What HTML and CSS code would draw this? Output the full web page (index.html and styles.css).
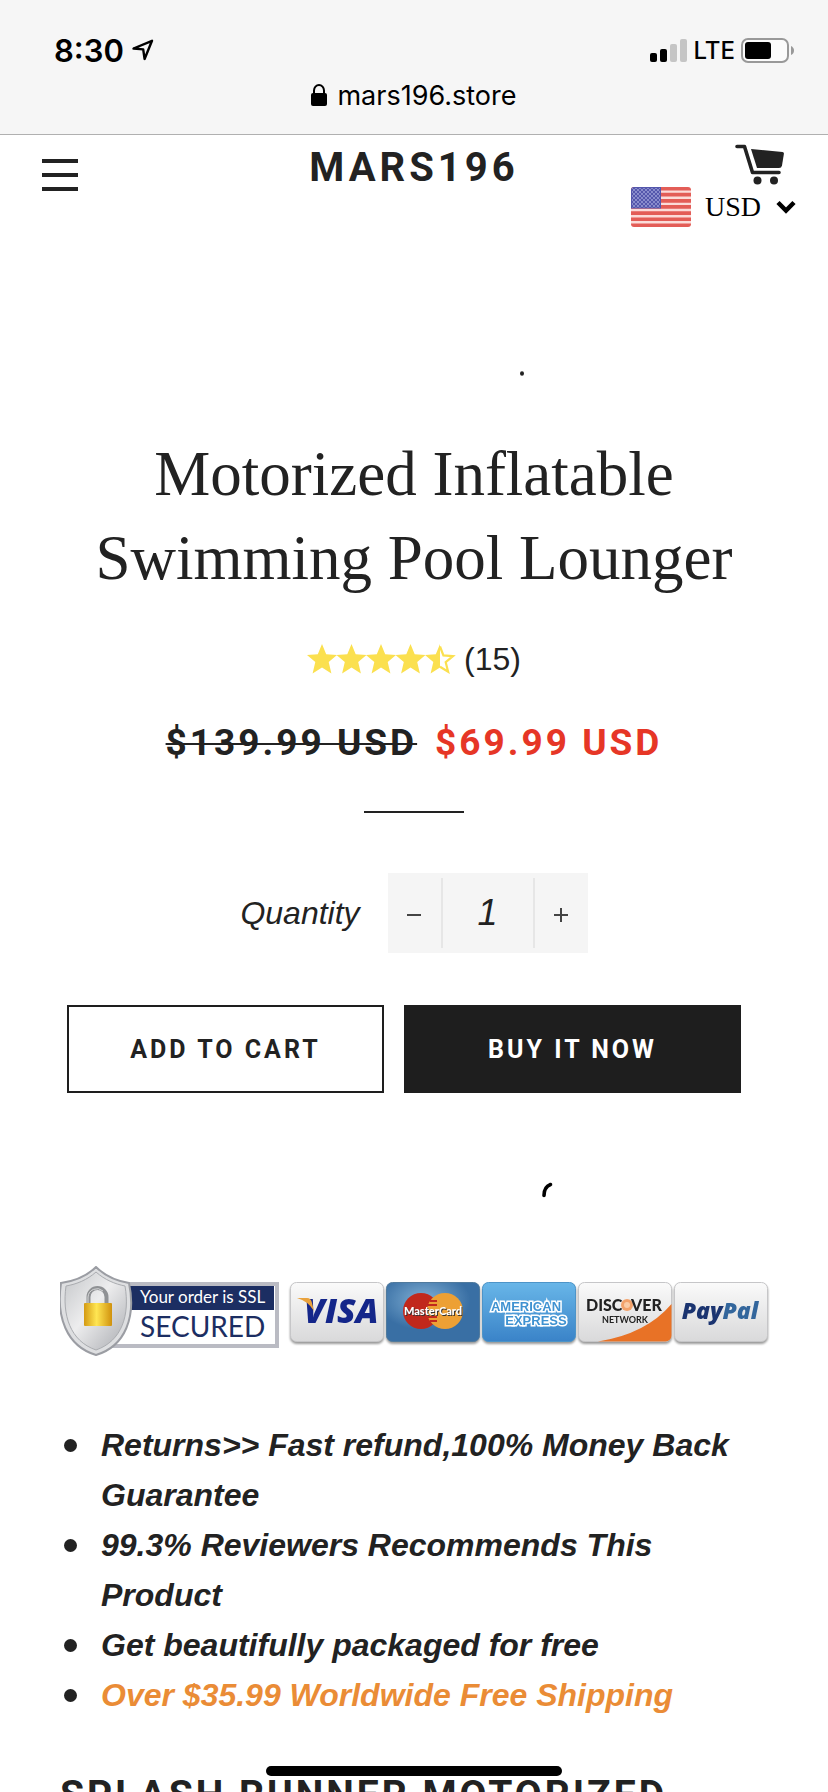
FILE: index.html
```html
<!DOCTYPE html>
<html lang="en">
<head>
<meta charset="utf-8">
<meta name="viewport" content="width=device-width, initial-scale=1">
<title>Motorized Inflatable Swimming Pool Lounger – MARS196</title>
<link rel="stylesheet" href="styles.css">
</head>
<body>
<div class="screen">
  <div class="browser-bar">
    <div class="status">
      <div class="status-left">
        <span class="time">8:30</span>
        <svg class="icon-location" width="22" height="22" viewBox="0 0 22 22" fill="none" stroke="#000" stroke-width="2.4" stroke-linejoin="round"><path d="M1.5 9.5 20 1.8 12.6 20 11.2 10.4Z"/></svg>
      </div>
      <div class="status-right">
        <svg width="38" height="24" viewBox="0 0 38 24"><rect x="0" y="15" width="7" height="9" rx="2"/><rect x="10" y="11" width="7" height="13" rx="2"/><rect x="20" y="6" width="7" height="18" rx="2" fill="#c5c5c5"/><rect x="30" y="1" width="7" height="23" rx="2" fill="#c5c5c5"/></svg>
        <span class="network">LTE</span>
        <svg width="53" height="25" viewBox="0 0 53 25"><rect x="1" y="1" width="46" height="23" rx="6" fill="#fbfbfb" stroke="#999" stroke-width="2"/><rect x="4" y="4" width="26" height="17" rx="3"/><path d="M50 8q3 1.5 3 4.500T50 17Z" fill="#999"/></svg>
      </div>
    </div>
    <div class="address">
      <svg width="16" height="22" viewBox="0 0 16 22"><rect x="0" y="9" width="16" height="13" rx="2"/><path d="M3 11V6.500a5 5.500 0 0 1 10 0V11" fill="none" stroke="#000" stroke-width="2"/></svg>
      <span>mars196.store</span>
    </div>
  </div>

  <header class="site-header">
    <button class="menu" aria-label="Menu"><svg width="36" height="32" viewBox="0 0 36 32" fill="#222"><path d="M0 0h36v4H0zM0 14h36v4H0zM0 28h36v4H0z"/></svg></button>
    <a class="brand" href="#">MARS196</a>
    <div class="header-tools">
      <a class="cart" href="#" aria-label="Cart"><svg width="50" height="41" viewBox="0 0 50 41" fill="#222"><path d="M16 5 47.500 8q1.500.2 1.400 1.700L47 21.500q-.5 2.500-3 2.500H22Z"/><path d="M2 2.500h7.500L17.500 28.500H44" fill="none" stroke="#222" stroke-width="3.600" stroke-linecap="round" stroke-linejoin="round"/><circle cx="22.500" cy="36.500" r="4"/><circle cx="39" cy="36.500" r="4"/></svg></a>
      <div class="currency">
        <svg width="60" height="40" viewBox="0 0 60 40">
          <defs><clipPath id="flag"><rect width="60" height="40" rx="3"/></clipPath><pattern id="stars" width="4" height="4" patternUnits="userSpaceOnUse"><circle cx="1" cy="1" r=".9" fill="#a2a5dc"/><circle cx="3" cy="3" r=".9" fill="#a2a5dc"/></pattern></defs>
          <g clip-path="url(#flag)"><rect width="60" height="40" fill="#e35d57"/><path d="M0 4.600h60M0 10.700h60M0 16.900h60M0 23h60M0 29.200h60M0 35.300h60" stroke="#fbdcd9" stroke-width="2.400"/><rect width="30" height="21.500" fill="#5457ac"/><rect x="1" y="1" width="28" height="19.500" fill="url(#stars)"/></g>
        </svg>
        <select class="currency-select" aria-label="Currency"><option>USD</option></select>
        <svg class="chevron" width="20" height="14" viewBox="0 0 20 14" fill="none" stroke="#000" stroke-width="4.500"><path d="M2 2.500 10 10.500 18 2.500"/></svg>
      </div>
    </div>
  </header>

  <main class="product">
    <div class="media"><svg width="4" height="5" viewBox="0 0 4 5"><ellipse cx="2" cy="2.500" rx="2" ry="2.300" fill="#222"/></svg></div>
    <h1 class="title">Motorized Inflatable Swimming Pool Lounger</h1>
    <div class="rating">
      <svg width="149" height="30" viewBox="0 0 149 30" fill="#fbe04f">
        <defs><path id="star" d="M15 0l4.200 10.200 10.800.8-8.300 7 2.700 11.500L15 23.600 5.600 29.500 8.300 18 0 11l10.800-.8Z"/></defs>
        <use href="#star"/><use href="#star" x="29.500"/><use href="#star" x="59"/><use href="#star" x="88.500"/>
        <path d="M133 0v23.600l-9.400 5.900 2.700-11.500-8.300-7 10.800-.8Z"/>
        <path d="M133 2.500l3.400 8.900 9.600.8-7.300 6 2.400 9.500-8.100-5" fill="none" stroke="#fbe04f" stroke-width="2.200"/>
      </svg>
      <span>(15)</span>
    </div>
    <div class="prices"><s class="price-old">$139.99 USD</s><span class="price-sale">$69.99 USD</span></div>
    <hr class="rule">
    <div class="quantity">
      <label for="qty">Quantity</label>
      <div class="stepper">
        <button class="step" aria-label="Decrease"><svg width="14" height="14" viewBox="0 0 14 14" stroke="#444" stroke-width="2"><path d="M0 7h14"/></svg></button>
        <input id="qty" class="qty" type="text" value="1">
        <button class="step" aria-label="Increase"><svg width="14" height="14" viewBox="0 0 14 14" stroke="#444" stroke-width="2"><path d="M0 7h14M7 0v14"/></svg></button>
      </div>
    </div>
    <div class="actions">
      <button class="btn btn-outline">Add to cart</button>
      <button class="btn btn-solid">Buy it now</button>
    </div>
    <div class="loading"><svg width="12" height="16" viewBox="0 0 12 16" fill="none" stroke="#000" stroke-width="3.600" stroke-linecap="round"><path d="M3 13.500Q3 5 9.500 2.500"/></svg></div>

    <div class="trust">
      <svg width="220" height="92" viewBox="0 0 220 92" role="img" aria-label="Your order is SSL secured">
        <defs>
          <linearGradient id="metal" x2="1" y2="1"><stop stop-color="#c4c6c9"/><stop offset=".45" stop-color="#ededee"/><stop offset="1" stop-color="#a9abb0"/></linearGradient>
          <linearGradient id="gold"><stop stop-color="#d49a13"/><stop offset=".45" stop-color="#ffe653"/><stop offset="1" stop-color="#d0910d"/></linearGradient>
        </defs>
        <rect x="40" y="18" width="177" height="62" fill="#fff" stroke="#babbc3" stroke-width="4"/>
        <rect x="50" y="20" width="164" height="24" fill="#1c2e62"/>
        <path d="M36 1C46 11 57 15 69 17 76 50 66 80 36 89 6 80-4 50 1 17 15 15 26 11 36 1Z" fill="#dedfe1" stroke="#9b9da3" stroke-width="2"/>
        <path d="M36 6C45 14 55 18 65 20 70 49 62 75 36 84 10 75 2 49 6 20 17 18 27 14 36 6Z" fill="url(#metal)" stroke="#aaacb0"/>
        <path d="M28.500 38V31a9 9 0 0 1 18 0v7" fill="none" stroke="#8f9194" stroke-width="4"/>
        <path d="M28 38V31a9 9 0 0 1 15-6" fill="none" stroke="#d7d8d9"/>
        <rect x="24" y="37" width="28" height="23" rx="1" fill="url(#gold)"/>
        <text x="80" y="37" class="ssl-small">Your order is SSL</text>
        <text x="80" y="71" class="ssl-big">SECURED</text>
      </svg>
      <div class="cards">
        <svg class="card" viewBox="0 0 94 60" role="img" aria-label="Visa">
          <defs><linearGradient id="silver" x2="0" y2="1"><stop stop-color="#fafafa"/><stop offset="1" stop-color="#d9d9da"/></linearGradient></defs>
          <rect x=".5" y=".5" width="93" height="59" rx="6" fill="url(#silver)" stroke="#c6c6c8"/>
          <text x="14" y="41" class="logo-visa">VISA</text><path d="M7 16h10q4 0 5 5l2 8Q18 19 7 16Z" fill="#e9a23c"/>
        </svg>
        <svg class="card" viewBox="0 0 94 60" role="img" aria-label="MasterCard">
          <defs><radialGradient id="steel" cx=".4" cy=".3"><stop stop-color="#80afd4"/><stop offset="1" stop-color="#396fa4"/></radialGradient></defs>
          <rect x=".5" y=".5" width="93" height="59" rx="6" fill="url(#steel)" stroke="#507a9d"/>
          <circle cx="35" cy="29" r="18" fill="#c1281c"/><circle cx="59" cy="29" r="18" fill="#eda034"/>
          <path d="M44 19h7M42 23h9M42 35h9M44 39h7" stroke="#c1281c" stroke-width="2"/>
          <text x="48" y="34" class="logo-mc-shadow">MasterCard</text><text x="47" y="33" class="logo-mc">MasterCard</text>
        </svg>
        <svg class="card" viewBox="0 0 94 60" role="img" aria-label="American Express">
          <defs><linearGradient id="sky" x2="0" y2="1"><stop stop-color="#68b6e8"/><stop offset="1" stop-color="#3a83c8"/></linearGradient></defs>
          <rect x=".5" y=".5" width="93" height="59" rx="6" fill="url(#sky)" stroke="#4d94c8"/>
          <text x="44" y="29" class="logo-amex">AMERICAN</text><text x="54" y="43" class="logo-amex">EXPRESS</text>
        </svg>
        <svg class="card" viewBox="0 0 94 60" role="img" aria-label="Discover Network">
          <rect x=".5" y=".5" width="93" height="59" rx="6" fill="url(#silver)" stroke="#c6c6c8"/>
          <path d="M20 59.500Q68 52 93.500 22V53.500a6 6 0 0 1-6 6Z" fill="#e87226"/>
          <circle cx="49" cy="23" r="6" fill="#f2a26b"/><circle cx="49" cy="23" r="3" fill="#f9cba6"/>
          <text x="8" y="29" class="logo-disc">DISC</text><text x="53" y="29" class="logo-disc">VER</text>
          <text x="47" y="41" class="logo-net">NETWORK</text>
        </svg>
        <svg class="card" viewBox="0 0 94 60" role="img" aria-label="PayPal">
          <rect x=".5" y=".5" width="93" height="59" rx="6" fill="url(#silver)" stroke="#c6c6c8"/>
          <text x="46" y="37" class="logo-pp">Pay<tspan fill="#33669c">Pal</tspan></text>
        </svg>
      </div>
    </div>

    <ul class="benefits">
      <li>Returns&gt;&gt; Fast refund,100% Money Back Guarantee</li>
      <li>99.3% Reviewers Recommends This Product</li>
      <li>Get beautifully packaged for free</li>
      <li><span class="highlight">Over $35.99 Worldwide Free Shipping</span></li>
    </ul>
    <h2 class="subtitle">SPLASH RUNNER MOTORIZED</h2>
  </main>
  <div class="home-indicator"></div>
</div>
</body>
</html>
```
FILE: styles.css
```css
* { box-sizing: border-box; }
body { margin: 0; background: #fff; color: #222; font-family: "Liberation Sans", Arial, sans-serif; }
svg { display: block; flex: none; }
button { border: 0; padding: 0; background: none; color: inherit; }
.screen { height: 100vh; overflow: hidden; }

.browser-bar { height: 135px; background: #f6f6f6; border-bottom: 1px solid #b0b0b0; color: #000; font-family: Inter, sans-serif; }
.status { display: flex; justify-content: space-between; align-items: center; padding: 30px 34px 0 54px; height: 70px; }
.status-left { display: flex; align-items: center; gap: 8px; }
.time { font-size: 31px; font-weight: 600; }
.status-right { display: flex; align-items: center; gap: 6px; }
.network { font-size: 24px; font-weight: 500; }
.address { display: flex; justify-content: center; align-items: center; gap: 10px; height: 50px; font-size: 27px; }

.site-header { display: grid; grid-template-columns: 1fr auto 1fr; align-items: start; height: 110px; padding: 0 32px; }
.menu { justify-self: start; margin: 24px 0 0 10px; }
.brand { margin-top: 9px; color: #222; font: 700 40px/48px Roboto, sans-serif; letter-spacing: 4px; text-decoration: none; }
.header-tools { display: flex; flex-direction: column; align-items: flex-end; padding-top: 9px; }
.cart { margin-right: 11px; }
.currency { display: flex; align-items: center; gap: 14px; margin-top: 2px; }
.currency-select { appearance: none; border: 0; padding: 0; background: none; color: #000; font: 28px/32px "Liberation Serif", serif; }

.media { display: flex; align-items: center; height: 187px; padding: 70px 0 0 520px; }
.title { margin: 0 60px; text-align: center; font: 400 63px/84px "Liberation Serif", serif; }
.rating { display: flex; justify-content: center; align-items: center; gap: 8px; height: 42px; margin-top: 38px; font-size: 32px; }
.prices { display: flex; justify-content: center; gap: 18px; margin-top: 41px; font: 700 37px/44px Roboto, sans-serif; letter-spacing: 3px; }
.price-old { text-decoration-thickness: 2px; }
.price-sale { color: #e63626; }
.rule { width: 100px; height: 2px; margin: 46px auto 0; border: 0; background: #222; }
.quantity { display: flex; justify-content: center; align-items: center; gap: 28px; margin-top: 60px; font-size: 32px; font-style: italic; }
.stepper { display: flex; align-items: center; height: 80px; background: #f5f5f5; }
.step { display: flex; justify-content: center; align-items: center; width: 53px; height: 70px; padding-top: 4px; }
.qty { width: 94px; height: 70px; padding: 0; border: solid #e6e6e6; border-width: 0 2px; background: none; color: #222; text-align: center; font: italic 36px "Liberation Sans", Arial, sans-serif; }
.actions { display: grid; grid-template-columns: 317fr 337fr; gap: 20px; margin-top: 52px; padding: 0 87px 0 67px; }
.btn { height: 88px; font: 700 25px Roboto, sans-serif; letter-spacing: 3px; text-transform: uppercase; }
.btn-outline { border: 2px solid #1e1e1e; }
.btn-solid { background: #1e1e1e; color: #fff; }
.loading { display: flex; align-items: center; height: 173px; padding: 20px 0 0 541px; }

.trust { display: flex; align-items: flex-start; justify-content: space-between; padding: 0 60px; }
.cards { display: flex; gap: 2px; margin-top: 16px; }
.card { width: 94px; height: 60px; filter: drop-shadow(0 2px 1px #999); }
.ssl-small { font: 17px Lato, sans-serif; fill: #fff; }
.ssl-big { font: 28px Lato, sans-serif; fill: #1c2e62; }
.logo-visa { font: italic 800 34px "Open Sans", sans-serif; fill: #14268a; }
.logo-mc, .logo-mc-shadow { font: 900 11px Lato, sans-serif; fill: #fff; text-anchor: middle; }
.logo-mc-shadow { fill: #333; }
.logo-amex { font: 700 13px "Liberation Sans", sans-serif; fill: #3f92d1; stroke: #fff; stroke-width: 3px; paint-order: stroke; text-anchor: middle; }
.logo-disc { font: 900 16px Lato, sans-serif; fill: #222; }
.logo-net { font: 700 9px Lato, sans-serif; fill: #222; text-anchor: middle; }
.logo-pp { font: italic 800 23px "Open Sans", sans-serif; fill: #1b3470; text-anchor: middle; }

.benefits { margin: 62px 60px 0; padding: 0 0 0 4px; list-style: none; font: italic 700 32px/50px "Liberation Sans", Arial, sans-serif; }
.benefits li { display: flex; gap: 24px; }
.benefits li::before { content: ""; flex: none; width: 13px; height: 13px; margin-top: 19px; border-radius: 50%; background: #222; }
.highlight { color: #ea8c36; }
.subtitle { margin: 50px 60px 0; font: 700 39px/50px Roboto, sans-serif; letter-spacing: 3px; white-space: nowrap; }
.home-indicator { position: fixed; bottom: 16px; left: 50%; width: 296px; height: 10px; margin-left: -148px; border-radius: 5px; background: #000; }
```
